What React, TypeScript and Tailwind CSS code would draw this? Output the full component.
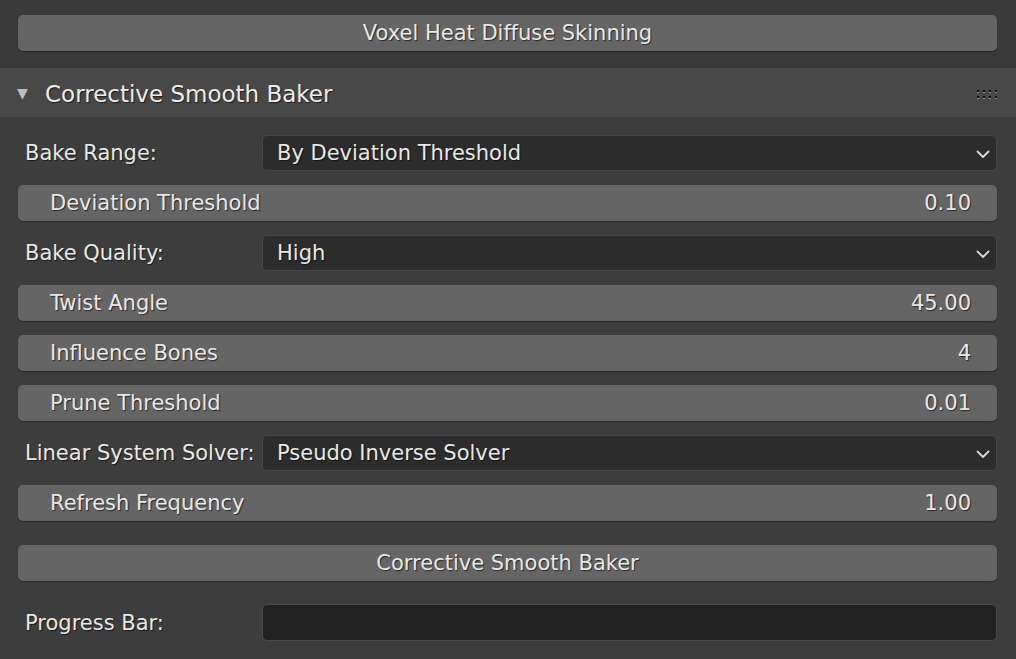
import { useState } from "react"

const font = { fontFamily: '"DejaVu Sans", "Noto Sans", sans-serif' }

const shadow = "[text-shadow:1px_1px_1px_rgba(0,0,0,0.6)]"

const Chevron = () => (
  <svg width="16" height="14" viewBox="0 0 16 14" className="shrink-0">
    <path d="M2.5 4.5 L8 10 L13.5 4.5" fill="none" stroke="#d8d8d8" strokeWidth="1.8" strokeLinecap="round" strokeLinejoin="round" />
  </svg>
)

const Button = ({ label }: { label: string }) => (
  <button
    className={`h-[36px] w-full rounded-[5px] bg-[#656565] pt-[2px] text-[21px] text-[#e8e8e8] shadow-[0_1px_1px_rgba(0,0,0,0.35)] ${shadow}`}
  >
    {label}
  </button>
)

const Slider = ({ label, value }: { label: string; value: string }) => (
  <div
    className={`flex h-[36px] items-center justify-between rounded-[5px] bg-[#656565] pl-[32px] pr-[26px] pt-[2px] text-[21px] text-[#e8e8e8] shadow-[0_1px_1px_rgba(0,0,0,0.35)] ${shadow}`}
  >
    <span>{label}</span>
    <span>{value}</span>
  </div>
)

const Select = ({ label, value }: { label: string; value: string }) => (
  <div className="flex h-[36px] items-center pt-[2px]">
    <span className={`w-[244px] pl-[7px] text-[21px] text-[#e8e8e8] ${shadow}`}>{label}</span>
    <div className="-mt-[2px] flex h-[36px] flex-1 items-center justify-between rounded-[5px] border border-[#464646] bg-[#2c2c2c] pl-[14px] pr-[5px] pt-[2px]">
      <span className={`text-[21px] text-[#e8e8e8] ${shadow}`}>{value}</span>
      <Chevron />
    </div>
  </div>
)

export default function App() {
  const [open, setOpen] = useState(true)

  return (
    <div className="h-[659px] w-[1016px] overflow-hidden bg-[#3d3d3d]" style={font}>
      <div className="bg-[#3a3a3a] pb-[17px] pl-[18px] pr-[19px] pt-[15px]">
        <Button label="Voxel Heat Diffuse Skinning" />
      </div>

      <div
        className="flex h-[49px] cursor-pointer items-center bg-[#484848] pl-[17px] pr-[19px]"
        onClick={() => setOpen(!open)}
      >
        <span className="w-[28px] pt-[2px] text-[14px] text-[#bdbdbd]">▼</span>
        <span className={`flex-1 pt-[3px] text-[23px] text-[#ececec] ${shadow}`}>Corrective Smooth Baker</span>
        <div className="grid grid-cols-4 gap-x-[4px] gap-y-[4px] pt-[2px]">
          {Array.from({ length: 8 }).map((_, i) => (
            <div key={i} className="h-[2px] w-[2px] bg-[#111111] shadow-[0_1px_0_#8a8a8a]" />
          ))}
        </div>
      </div>

      {open && (
        <div className="flex flex-col gap-[14px] pl-[18px] pr-[19px] pt-[18px]">
          <Select label="Bake Range:" value="By Deviation Threshold" />
          <Slider label="Deviation Threshold" value="0.10" />
          <Select label="Bake Quality:" value="High" />
          <Slider label="Twist Angle" value="45.00" />
          <Slider label="Influence Bones" value="4" />
          <Slider label="Prune Threshold" value="0.01" />
          <Select label="Linear System Solver:" value="Pseudo Inverse Solver" />
          <Slider label="Refresh Frequency" value="1.00" />
          <div className="pt-[10px]">
            <Button label="Corrective Smooth Baker" />
          </div>
          <div className="mt-[9px] flex h-[37px] items-center">
            <span className={`w-[244px] pl-[7px] pt-[2px] text-[21px] text-[#e8e8e8] ${shadow}`}>Progress Bar:</span>
            <div className="h-full flex-1 rounded-[5px] border border-[#4a4a4a] bg-[#222222]" />
          </div>
        </div>
      )}
    </div>
  )
}
